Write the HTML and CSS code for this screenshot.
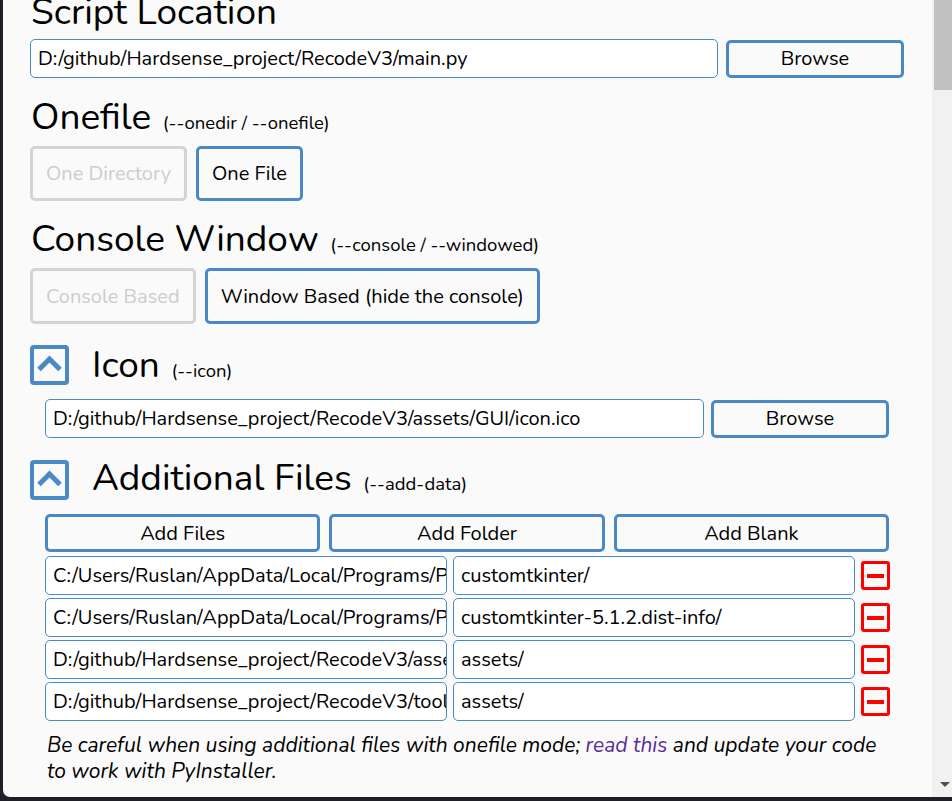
FILE: index.html
```html
<!DOCTYPE html>
<html lang="en">
<head>
<meta charset="utf-8">
<title>auto-py-to-exe</title>
<link rel="stylesheet" href="styles.css">
</head>
<body>
<div class="window">
  <main class="content">
    <section class="block first">
      <h2 class="heading">Script Location</h2>
      <div class="path-row">
        <div class="input">D:/github/Hardsense_project/RecodeV3/main.py</div>
        <button class="btn browse">Browse</button>
      </div>
    </section>

    <section class="block">
      <h2 class="heading">Onefile <span class="note">(--onedir / --onefile)</span></h2>
      <div class="choice-row">
        <button class="btn choice off">One Directory</button>
        <button class="btn choice">One File</button>
      </div>
    </section>

    <section class="block console-sec">
      <h2 class="heading">Console Window <span class="note">(--console / --windowed)</span></h2>
      <div class="choice-row tall">
        <button class="btn choice off">Console Based</button>
        <button class="btn choice">Window Based (hide the console)</button>
      </div>
    </section>

    <section class="block collapsible icon-sec">
      <div class="collapse-head">
        <button class="toggle" aria-label="collapse">
          <svg width="31" height="32" viewBox="0 0 31 32"><polyline points="5,20.5 15.5,10 26,20.5" fill="none" stroke="#4a89c6" stroke-width="5" stroke-linecap="butt" stroke-linejoin="miter"/></svg>
        </button>
        <h2 class="heading">Icon <span class="note">(--icon)</span></h2>
      </div>
      <div class="inner">
        <div class="path-row">
          <div class="input">D:/github/Hardsense_project/RecodeV3/assets/GUI/icon.ico</div>
          <button class="btn browse">Browse</button>
        </div>
      </div>
    </section>

    <section class="block collapsible files-sec">
      <div class="collapse-head">
        <button class="toggle" aria-label="collapse">
          <svg width="31" height="32" viewBox="0 0 31 32"><polyline points="5,20.5 15.5,10 26,20.5" fill="none" stroke="#4a89c6" stroke-width="5" stroke-linecap="butt" stroke-linejoin="miter"/></svg>
        </button>
        <h2 class="heading">Additional Files <span class="note">(--add-data)</span></h2>
      </div>
      <div class="inner">
        <div class="add-row">
          <button class="btn add">Add Files</button>
          <button class="btn add">Add Folder</button>
          <button class="btn add">Add Blank</button>
        </div>
        <div class="data-rows">
          <div class="data-row">
            <div class="input">C:/Users/Ruslan/AppData/Local/Programs/Python/Python311/Lib/site-packages/customtkinter</div>
            <div class="input">customtkinter/</div>
            <button class="remove" aria-label="remove"><span></span></button>
          </div>
          <div class="data-row">
            <div class="input">C:/Users/Ruslan/AppData/Local/Programs/Python/Python311/Lib/site-packages/customtkinter-5.1.2.dist-info</div>
            <div class="input">customtkinter-5.1.2.dist-info/</div>
            <button class="remove" aria-label="remove"><span></span></button>
          </div>
          <div class="data-row">
            <div class="input">D:/github/Hardsense_project/RecodeV3/assets</div>
            <div class="input">assets/</div>
            <button class="remove" aria-label="remove"><span></span></button>
          </div>
          <div class="data-row">
            <div class="input">D:/github/Hardsense_project/RecodeV3/tools/assets</div>
            <div class="input">assets/</div>
            <button class="remove" aria-label="remove"><span></span></button>
          </div>
        </div>
        <p class="warning">Be careful when using additional files with onefile mode; <a href="#">read this</a> and update your code to work with PyInstaller.</p>
      </div>
    </section>
  </main>
  <div class="scrollbar">
    <div class="thumb"></div>
    <div class="arrow"></div>
  </div>
</div>
</body>
</html>
```

FILE: styles.css
```css
* { box-sizing: border-box; }

html, body {
  margin: 0;
  height: 100%;
}

body {
  background: #1d2127;
  overflow: hidden;
  font-family: "Nunito", "Lato", "Liberation Sans", sans-serif;
  color: #000;
}

.window {
  margin-left: 3px;
  height: 797px;
  background: #fafafa;
  border-bottom-left-radius: 7px;
  display: flex;
  overflow: hidden;
}

.content {
  flex: 1;
  padding: 0 28px 0 27px;
  overflow: hidden;
}

.block.first {
  margin-top: -8px;
}

.heading {
  margin: 0;
  font-weight: 400;
  font-size: 37px;
  line-height: 40px;
  height: 40px;
  padding-left: 1px;
  white-space: nowrap;
}

.note {
  font-size: 18.5px;
  line-height: 1;
  margin-left: 2px;
}

.path-row {
  display: flex;
  gap: 8px;
  align-items: center;
  margin-top: 7px;
}

.input {
  flex: 1;
  min-width: 0;
  height: 39px;
  background: #fff;
  border: 1px solid #4a89c6;
  border-radius: 5px;
  padding: 0 7px;
  font-size: 20px;
  line-height: 37px;
  white-space: nowrap;
  overflow: hidden;
}

.btn {
  font-family: inherit;
  font-size: 20px;
  color: #000;
  background: #fafafa;
  border: 3px solid #4a89c6;
  border-radius: 5px;
  cursor: pointer;
  padding: 0 13px;
}

.browse {
  width: 178px;
  height: 38px;
  flex: none;
}

.block {
  margin-top: 19px;
}

.console-sec {
  margin-top: 18px;
}

.choice-row {
  display: flex;
  gap: 9px;
  margin-top: 9px;
}

.choice {
  height: 55px;
}

.choice-row.tall .choice {
  height: 56px;
}

.choice.off {
  border-color: #d4d4d4;
  color: #cdcdcd;
}

.icon-sec {
  margin-top: 21px;
}

.files-sec {
  margin-top: 22px;
}

.collapse-head {
  display: flex;
  align-items: center;
  gap: 22px;
}

.files-sec .collapse-head .heading {
  margin-top: -4px;
}

.toggle {
  flex: none;
  width: 39px;
  height: 40px;
  padding: 0;
  background: #fafafa;
  border: 4px solid #4a89c6;
  border-radius: 4px;
  display: flex;
  align-items: center;
  justify-content: center;
}

.toggle svg { display: block; }

.inner {
  padding: 0 15px;
}

.icon-sec .path-row {
  margin-top: 14px;
  gap: 7px;
}

.add-row {
  display: grid;
  grid-template-columns: 1fr 1fr 1fr;
  gap: 9px;
  margin-top: 14px;
}

.add {
  height: 38px;
}

.data-rows {
  display: flex;
  flex-direction: column;
  gap: 3px;
  margin-top: 4px;
}

.data-row {
  display: flex;
  gap: 6px;
  align-items: center;
}

.data-row .input {
  flex: 0 0 402px;
}

.remove {
  flex: none;
  width: 29px;
  height: 29px;
  padding: 0;
  background: #fafafa;
  border: 3px solid #ff0000;
  border-radius: 3px;
  display: flex;
  align-items: center;
  justify-content: center;
}

.remove span {
  display: block;
  width: 17px;
  height: 4px;
  background: #ff0000;
}

.warning {
  margin: 11px 0 0 2px;
  font-style: italic;
  font-size: 21px;
  line-height: 26px;
}

.warning a {
  color: #5b2a9c;
  text-decoration: none;
}

.scrollbar {
  flex: none;
  width: 20px;
  background: #f1f1f1;
  position: relative;
}

.thumb {
  position: absolute;
  top: 0;
  left: 2px;
  right: 0;
  height: 90px;
  background: #c1c1c1;
}

.arrow {
  position: absolute;
  left: 8px;
  bottom: 10px;
  width: 0;
  height: 0;
  border-left: 5px solid transparent;
  border-right: 5px solid transparent;
  border-top: 5px solid #505050;
}
```
